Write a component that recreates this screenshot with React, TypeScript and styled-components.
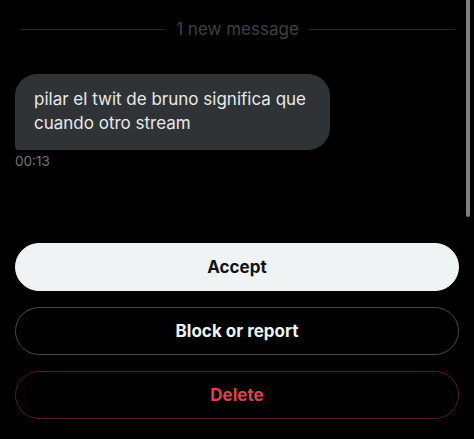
import React from "react";
import styled, { createGlobalStyle } from "styled-components";

const Global = createGlobalStyle`
  html, body { margin: 0; padding: 0; background: #000; }
  body { font-family: Inter, "Liberation Sans", Arial, sans-serif; }
  * { box-sizing: border-box; }
`;

const Screen = styled.div`
  position: relative;
  width: 474px;
  height: 439px;
  background: #000;
  overflow: hidden;
  display: flex;
  flex-direction: column;
  padding: 18px 15px 20px;
`;

const Divider = styled.div`
  display: flex;
  align-items: center;
  gap: 10px;
  padding: 0 4px 0 5px;
  height: 22px;
`;

const Rule = styled.div`
  flex: 1;
  height: 1px;
  background: #25282b;
`;

const DividerLabel = styled.span`
  font-size: 17px;
  line-height: 22px;
  color: #3d4044;
  white-space: nowrap;
`;

const Bubble = styled.div`
  margin-top: 34px;
  max-width: 315px;
  background: #2f3336;
  color: #e7e9ea;
  font-size: 17px;
  line-height: 24px;
  padding: 13px 16px 15px 19px;
  border-radius: 22px 22px 22px 4px;
`;

const Time = styled.div`
  margin-top: 3px;
  font-size: 13.5px;
  line-height: 16px;
  color: #6f7378;
`;

const Spacer = styled.div`
  flex: 1;
`;

const Actions = styled.div`
  display: flex;
  flex-direction: column;
  gap: 16px;
`;

type Variant = "primary" | "outline" | "danger";

const Button = styled.button<{ $variant: Variant }>`
  height: 48px;
  width: 100%;
  border-radius: 24px;
  font-family: inherit;
  font-size: 17px;
  font-weight: 700;
  cursor: pointer;
  background: ${(p) => (p.$variant === "primary" ? "#eff3f4" : "#000")};
  color: ${(p) =>
    p.$variant === "primary" ? "#0f1419" : p.$variant === "danger" ? "#d9434b" : "#eff3f4"};
  border: 1px solid
    ${(p) =>
      p.$variant === "primary" ? "#eff3f4" : p.$variant === "danger" ? "#5a1a1f" : "#45494d"};
`;

const ScrollThumb = styled.div`
  position: absolute;
  top: 0;
  right: 4px;
  width: 4px;
  height: 217px;
  background: #7f7f7f;
  border-radius: 0 0 2px 2px;
`;

export default function App() {
  return (
    <>
      <Global />
      <Screen>
        <Divider>
          <Rule />
          <DividerLabel>1 new message</DividerLabel>
          <Rule />
        </Divider>
        <Bubble>pilar el twit de bruno significa que cuando otro stream</Bubble>
        <Time>00:13</Time>
        <Spacer />
        <Actions>
          <Button $variant="primary">Accept</Button>
          <Button $variant="outline">Block or report</Button>
          <Button $variant="danger">Delete</Button>
        </Actions>
        <ScrollThumb />
      </Screen>
    </>
  );
}
